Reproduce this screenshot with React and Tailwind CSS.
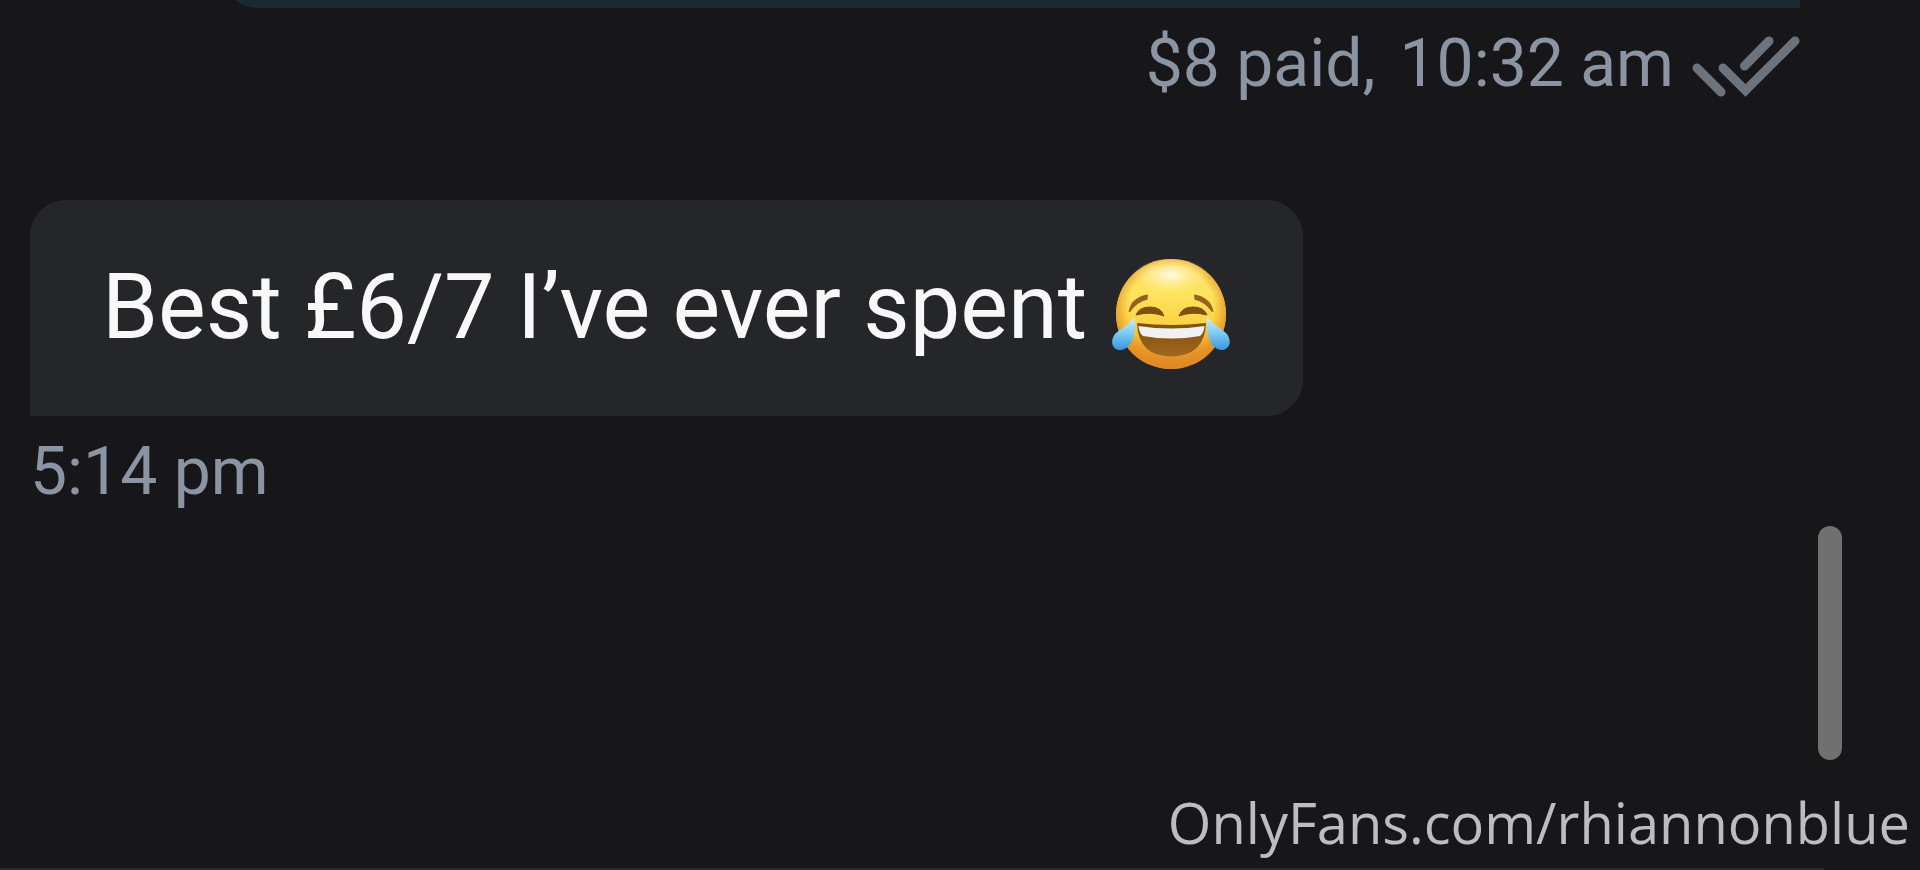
const messages = [
  { id: 1, text: 'Best £6/7 I’ve ever spent', time: '5:14 pm' },
];

function DoubleCheckIcon() {
  return (
    <svg
      viewBox="32 11 108 66"
      className="h-[66px] w-[108px] shrink-0"
      fill="none"
      stroke="#6b737d"
      strokeWidth="9"
      strokeLinecap="round"
      aria-hidden="true"
    >
      <path d="M37 48 61 72" />
      <path d="M63 48 85.5 70.5 135 21" />
      <path d="M84.5 46 109 21" />
    </svg>
  );
}

function JoyEmoji() {
  return (
    <svg viewBox="21 6 120 124" className="h-[124px] w-[120px] shrink-0" role="img" aria-label="face with tears of joy">
      <defs>
        <linearGradient id="face" x1="0" y1="0" x2="0" y2="1">
          <stop offset="0" stopColor="#fbd65a" />
          <stop offset="0.3" stopColor="#fde560" />
          <stop offset="0.6" stopColor="#fbd243" />
          <stop offset="0.8" stopColor="#eba630" />
          <stop offset="1" stopColor="#d9822a" />
        </linearGradient>
        <radialGradient id="rim" cx="0.5" cy="0.46" r="0.54">
          <stop offset="0.72" stopColor="#e28a20" stopOpacity="0" />
          <stop offset="1" stopColor="#e28a20" stopOpacity="0.9" />
        </radialGradient>
        <radialGradient id="shine" cx="0.5" cy="0.45" r="0.5">
          <stop offset="0" stopColor="#fffbe6" />
          <stop offset="1" stopColor="#fff3a0" stopOpacity="0" />
        </radialGradient>
        <linearGradient id="mouth" x1="0" y1="0" x2="0" y2="1">
          <stop offset="0" stopColor="#80500f" />
          <stop offset="1" stopColor="#a0661d" />
        </linearGradient>
        <linearGradient id="tear" x1="0" y1="0" x2="0" y2="1">
          <stop offset="0" stopColor="#d3f0f8" />
          <stop offset="0.5" stopColor="#7ccaf3" />
          <stop offset="1" stopColor="#3795e2" />
        </linearGradient>
      </defs>
      <circle cx="81" cy="74" r="55" fill="url(#face)" />
      <circle cx="81" cy="74" r="55" fill="url(#rim)" />
      <ellipse cx="81" cy="37" rx="38" ry="18" fill="url(#shine)" />
      <path d="M38.5 72Q41 57 58 54.500L57.500 59.500Q47 62 40 72Z" fill="#96611c" />
      <path d="M123.5 72Q121 57 104 54.500L104.500 59.500Q115 62 122 72Z" fill="#96611c" />
      <path
        d="M46 75Q49 67 60 67Q71 67 74 76Q61 71 46 75Z"
        fill="#80500f"
        stroke="#80500f"
        strokeLinejoin="round"
      />
      <path
        d="M117 75Q114 67 103 67Q92 67 89 76Q102 71 117 75Z"
        fill="#80500f"
        stroke="#80500f"
        strokeLinejoin="round"
      />
      <path d="M47 83Q81 87 116 83Q115 116 81 116.500Q48 116 47 83Z" fill="url(#mouth)" />
      <path d="M48.5 86Q81 91 114.500 86Q114 93 110 96Q81 101 53 96Q49 93 48.500 86Z" fill="#f1f0f3" />
      <path d="M44.5 77C47 92 42 108.500 31 110C20.500 110 20 99 26 93C33 87 40 84 44.500 77Z" fill="url(#tear)" />
      <path d="M117.5 77C115 92 120 108.500 131 110C141 110 142 99 136 93C129 87 122 84 117.500 77Z" fill="url(#tear)" />
    </svg>
  );
}

function Message({ text, time }) {
  return (
    <article className="flex flex-col items-start">
      <div className="flex items-center gap-6 rounded-[36px] rounded-bl-none bg-[#25262a] px-[72px] py-[46px]">
        <p className="text-[90px] leading-[112px] whitespace-nowrap text-[#f8f8f8]">{text}</p>
        <JoyEmoji />
      </div>
      <time className="mt-4 text-[66px] leading-[80px] text-[#8a94a3]">{time}</time>
    </article>
  );
}

export default function App() {
  return (
    <div className="relative flex min-h-screen flex-col overflow-hidden bg-[#17171a] font-['Roboto',sans-serif]">
      <main className="flex-1 pr-[120px] pl-[30px]">
        {/* tail of the previous message */}
        <div className="ml-[192px] h-2 overflow-hidden">
          <div className="-mt-16 h-[72px] rounded-bl-[36px] bg-[#1a2a31]" />
        </div>

        <div className="mt-4 flex items-center justify-end gap-[18px] text-[66px] leading-[80px] text-[#8a94a3]">
          <p className="flex gap-6 whitespace-nowrap">
            <span>$8 paid,</span>
            <time>10:32 am</time>
          </p>
          <DoubleCheckIcon />
        </div>

        <div className="mt-24">
          {messages.map((m) => (
            <Message key={m.id} text={m.text} time={m.time} />
          ))}
        </div>
      </main>

      <div className="mr-24 h-0.5 bg-[#2a2a2d]" />

      {/* scroll thumb */}
      <div className="absolute right-[78px] bottom-[110px] h-[234px] w-6 rounded-full bg-[#707070]" />

      <a
        href="#profile"
        className="absolute right-[10px] bottom-2 font-['Open_Sans',sans-serif] text-[56px] leading-[80px] text-[#bdbdbf]"
      >
        OnlyFans.com/rhiannonblue
      </a>
    </div>
  );
}
